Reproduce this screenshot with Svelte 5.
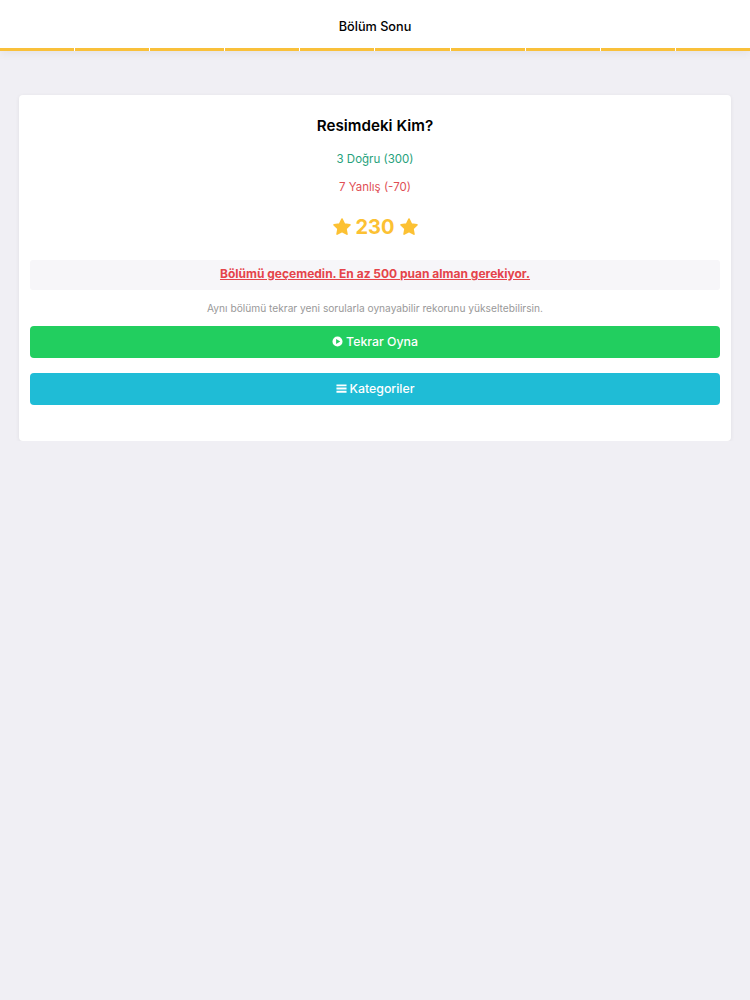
<script>
    const segments = Array(10).fill(0);
</script>

<header class="topbar">
    <div class="title">Bölüm Sonu</div>
    <div class="progress">
        {#each segments as _}
            <span class="seg"></span>
        {/each}
    </div>
</header>

<main class="page">
    <section class="card">
        <h1>Resimdeki Kim?</h1>
        <p class="stat right">3 Doğru (300)</p>
        <p class="stat wrong">7 Yanlış (-70)</p>
        <div class="score">
            <svg viewBox="0 0 24 24" class="star"><path d="M12 2.500l2.900 6 6.600.9-4.800 4.600 1.200 6.500L12 17.400l-5.900 3.100 1.200-6.500-4.800-4.600 6.600-.9z" /></svg>
            <span>230</span>
            <svg viewBox="0 0 24 24" class="star"><path d="M12 2.500l2.900 6 6.600.9-4.800 4.600 1.200 6.500L12 17.400l-5.900 3.100 1.200-6.500-4.800-4.600 6.600-.9z" /></svg>
        </div>
        <div class="alert"><u>Bölümü geçemedin. En az 500 puan alman gerekiyor.</u></div>
        <p class="hint">Aynı bölümü tekrar yeni sorularla oynayabilir rekorunu yükseltebilirsin.</p>
        <button class="btn green">
            <svg viewBox="0 0 24 24" class="icon"><path fill-rule="evenodd" d="M12 1a11 11 0 1 0 0 22 11 11 0 0 0 0-22zM9 6.500l9 5.500-9 5.500z" /></svg>
            Tekrar Oyna
        </button>
        <button class="btn cyan">
            <svg viewBox="0 0 24 24" class="icon"><path d="M1 3h22v4H1zM1 10h22v4H1zM1 17h22v4H1z" /></svg>
            Kategoriler
        </button>
    </section>
</main>

<style>
    :global(body) {
        background: #f0eff4;
        font-family: Inter, "Liberation Sans", sans-serif;
    }

    .topbar {
        background: #fff;
        box-shadow: 0 3px 8px rgba(0, 0, 0, 0.05);
    }

    .title {
        height: 48px;
        display: flex;
        align-items: center;
        justify-content: center;
        padding-top: 4px;
        box-sizing: border-box;
        font-size: 12.700px;
        font-weight: 500;
        color: #000;
    }

    .progress {
        display: flex;
        gap: 1px;
        height: 3px;
    }

    .seg {
        flex: 1;
        background: #f9c03a;
    }

    .page {
        padding: 44px 19px 0;
    }

    .card {
        background: #fff;
        border-radius: 4px;
        box-shadow: 0 1px 4px rgba(0, 0, 0, 0.07);
        padding: 21px 11px 36px;
        display: flex;
        flex-direction: column;
        align-items: stretch;
        text-align: center;
    }

    h1 {
        margin: 0;
        font-size: 15.200px;
        line-height: 19px;
        font-weight: 600;
        color: #000;
    }

    .stat {
        margin: 0;
        font-size: 11.500px;
        line-height: 16px;
    }

    .right {
        margin-top: 16px;
        color: #26a17b;
    }

    .wrong {
        margin-top: 12px;
        color: #e04f55;
    }

    .score {
        margin-top: 19px;
        display: flex;
        align-items: center;
        justify-content: center;
        gap: 4px;
        font-size: 20px;
        line-height: 26px;
        font-weight: 700;
        color: #fcc133;
    }

    .star {
        width: 20px;
        height: 20px;
        fill: #fcc133;
        stroke: #fcc133;
        stroke-width: 2;
        stroke-linejoin: round;
    }

    .alert {
        margin-top: 20px;
        height: 30px;
        padding-bottom: 3px;
        box-sizing: border-box;
        display: flex;
        align-items: center;
        justify-content: center;
        background: #f7f6f9;
        border-radius: 3px;
        font-size: 12px;
        font-weight: 700;
        color: #e5444a;
    }

    .hint {
        margin: 11px 0 1px;
        font-size: 10.200px;
        line-height: 14px;
        color: #999;
    }

    .btn {
        height: 32px;
        margin-top: 10px;
        padding: 0 0 2px;
        border: 0;
        border-radius: 4px;
        display: flex;
        align-items: center;
        justify-content: center;
        gap: 3px;
        color: #fff;
        font-family: inherit;
        font-size: 12.300px;
        font-weight: 500;
    }

    .green {
        background: #22ce5f;
    }

    .cyan {
        margin-top: 15px;
        background: #1fbcd6;
    }

    .icon {
        width: 11px;
        height: 11px;
        fill: #fff;
    }
</style>
